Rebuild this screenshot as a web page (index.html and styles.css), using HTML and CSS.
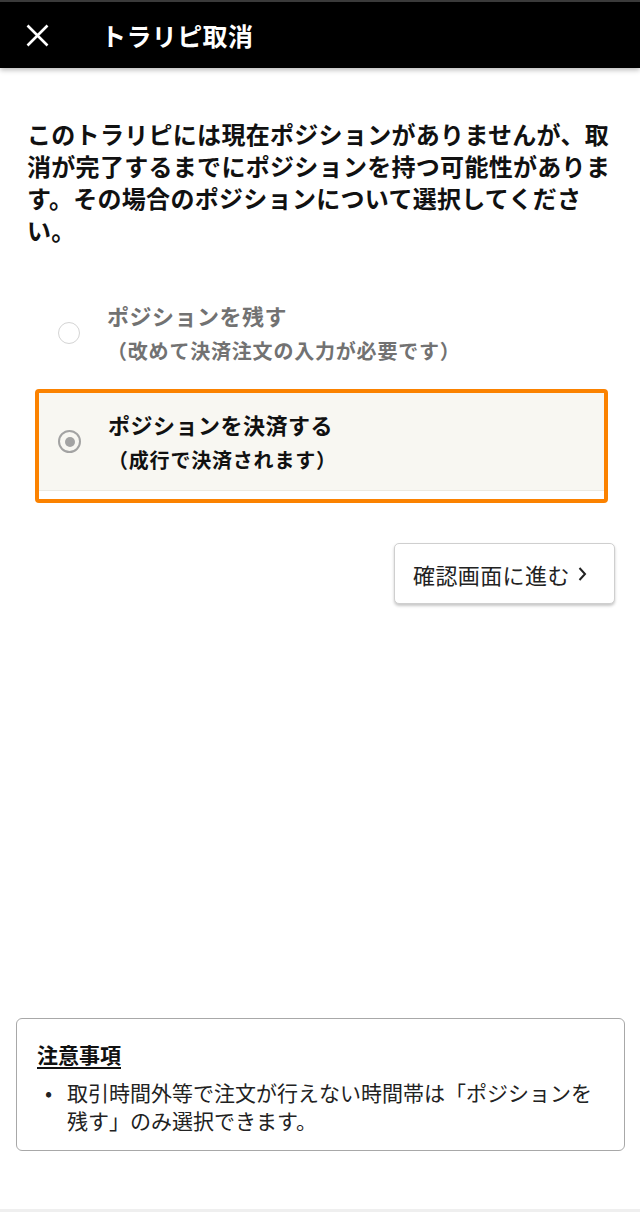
FILE: index.html
```html
<!DOCTYPE html>
<html lang="ja">
<head>
<meta charset="utf-8">
<title>トラリピ取消</title>
<link rel="stylesheet" href="styles.css">
</head>
<body>
<div class="page">
  <header class="header">
    <svg class="close" width="23" height="23" viewBox="0 0 23 23"><path d="M1.5 1.5 L21.5 21.5 M21.5 1.5 L1.5 21.5" stroke="#fff" stroke-width="2.6" stroke-linecap="butt" fill="none"/></svg>
    <h1 class="title">トラリピ取消</h1>
  </header>

  <main class="main">
    <p class="intro">このトラリピには現在ポジションがありませんが、取消が完了するまでにポジションを持つ可能性があります。その場合のポジションについて選択してください。</p>

    <div class="options">
      <label class="option">
        <div class="option-inner">
          <span class="radio"></span>
          <span class="option-text muted">
            <span class="option-label">ポジションを残す</span>
            <span class="option-sub">（改めて決済注文の入力が必要です）</span>
          </span>
        </div>
      </label>
      <label class="option selected">
        <div class="option-inner">
          <span class="radio checked"><span class="dot"></span></span>
          <span class="option-text">
            <span class="option-label">ポジションを決済する</span>
            <span class="option-sub">（成行で決済されます）</span>
          </span>
        </div>
      </label>
    </div>

    <button class="next-btn">確認画面に進む<svg class="chev" width="9" height="16" viewBox="0 0 9 16"><path d="M1.5 2 L7 8 L1.5 14" stroke="#222" stroke-width="2" fill="none"/></svg></button>
  </main>

  <section class="notice">
    <h2 class="notice-title">注意事項</h2>
    <ul class="notice-list">
      <li><span class="bullet">•</span><span>取引時間外等で注文が行えない時間帯は「ポジションを残す」のみ選択できます。</span></li>
    </ul>
  </section>
  <div class="bottom-strip"></div>
</div>
</body>
</html>
```

FILE: styles.css
```css
* { box-sizing: border-box; }
html, body { margin: 0; padding: 0; }
body {
  background: #fff;
  font-family: "Noto Sans CJK JP", "Noto Sans", sans-serif;
  color: #111;
}
.page {
  min-height: 1212px;
  display: flex;
  flex-direction: column;
}
.header {
  height: 68px;
  background: #000;
  border-top: 2px solid #3a3a3a;
  display: flex;
  align-items: center;
  padding-left: 26px;
  box-shadow: 0 2px 5px rgba(0,0,0,0.28);
  position: relative;
  z-index: 1;
}
.close { display: block; }
.title {
  margin: 0 0 0 52px;
  color: #fff;
  font-size: 25px;
  font-weight: 700;
  line-height: 1;
  letter-spacing: 0.4px;
}
.main {
  padding: 0 27px;
  display: flex;
  flex-direction: column;
}
.intro {
  margin: 50px 0 0;
  font-size: 24px;
  font-weight: 700;
  line-height: 32px;
  letter-spacing: 0.3px;
  color: #111;
}
.options {
  margin: 34px 5px 0 8px;
  display: flex;
  flex-direction: column;
}
.option {
  display: block;
  border: 4px solid transparent;
  border-radius: 4px;
  padding-bottom: 8px;
}
.option + .option { margin-top: -5px; }
.option.selected { border-color: #fb8200; }
.option-inner {
  display: flex;
  align-items: center;
  height: 98px;
  padding-left: 19px;
}
.option.selected .option-inner {
  background: #f8f7f2;
  border-bottom: 1px solid #ebe9e1;
}
.radio {
  width: 22px;
  height: 22px;
  border-radius: 50%;
  border: 1.5px solid #d4d4d4;
  flex: none;
  display: flex;
  align-items: center;
  justify-content: center;
}
.radio.checked {
  width: 23px;
  height: 23px;
  border: 2px solid #a3a3a3;
}
.dot {
  width: 10px;
  height: 10px;
  border-radius: 50%;
  background: #a3a3a3;
}
.option-text {
  margin-left: 27px;
  display: flex;
  flex-direction: column;
  font-weight: 700;
  color: #111;
}
.option-text.muted { color: #727272; }
.option-label {
  font-size: 22px;
  line-height: 30px;
  letter-spacing: 0.5px;
}
.option-sub {
  font-size: 20px;
  line-height: 30px;
  margin-top: 6px;
  letter-spacing: 0.8px;
}
.next-btn {
  align-self: flex-end;
  margin: 40px -2px 0 0;
  height: 61px;
  width: 221px;
  padding: 0 0 0 18px;
  background: #fff;
  border: 1px solid #cfcfcf;
  border-radius: 5px;
  box-shadow: 0 2px 3px rgba(0,0,0,0.22);
  font-family: "Noto Sans CJK JP", "Noto Sans", sans-serif;
  font-size: 22px;
  font-weight: 400;
  color: #222;
  display: flex;
  align-items: center;
  gap: 8px;
  letter-spacing: 0.4px;
}
.chev { display: block; }
.notice {
  margin: auto 15px 58px 16px;
  border: 1px solid #a8a8a8;
  border-radius: 6px;
  padding: 20px 20px 16px 20px;
}
.notice-title {
  margin: 0;
  font-size: 21px;
  font-weight: 700;
  line-height: 30px;
  text-decoration: underline;
  text-underline-offset: 4px;
  text-decoration-thickness: 2px;
  color: #111;
}
.notice-list {
  list-style: none;
  margin: 9px 0 0;
  padding: 0;
}
.notice-list li {
  display: flex;
  font-size: 21px;
  line-height: 28px;
  color: #222;
}
.bullet {
  flex: none;
  width: 30px;
  padding-left: 8px;
}
.bottom-strip {
  height: 3px;
  background: #efefef;
}
```
